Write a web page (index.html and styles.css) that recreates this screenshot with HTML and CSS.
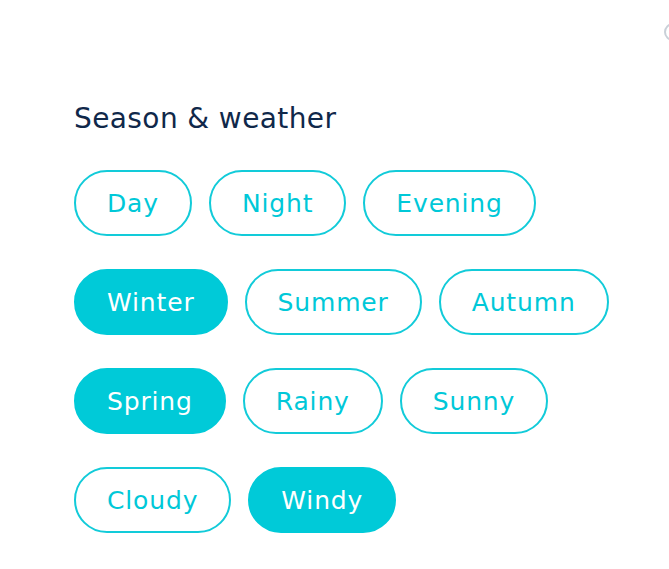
FILE: index.html
```html
<!DOCTYPE html>
<html lang="en">
<head>
<meta charset="utf-8">
<title>Season & weather</title>
<link rel="stylesheet" href="styles.css">
</head>
<body>
<span class="corner-icon" aria-hidden="true"></span>
<section class="panel">
  <h2 class="title">Season &amp; weather</h2>
  <div class="chip-row">
    <button class="chip">Day</button>
    <button class="chip">Night</button>
    <button class="chip">Evening</button>
  </div>
  <div class="chip-row">
    <button class="chip chip--active">Winter</button>
    <button class="chip">Summer</button>
    <button class="chip">Autumn</button>
  </div>
  <div class="chip-row">
    <button class="chip chip--active">Spring</button>
    <button class="chip">Rainy</button>
    <button class="chip">Sunny</button>
  </div>
  <div class="chip-row">
    <button class="chip">Cloudy</button>
    <button class="chip chip--active">Windy</button>
  </div>
</section>
</body>
</html>
```
FILE: styles.css
```css
html, body {
  margin: 0;
  padding: 0;
  background: #ffffff;
}
body {
  width: 669px;
  height: 569px;
  overflow: hidden;
  position: relative;
  font-family: "DejaVu Sans", "Open Sans", sans-serif;
}
.corner-icon {
  position: absolute;
  left: 664px;
  top: 23px;
  width: 14px;
  height: 14px;
  border: 2px solid #c9d0d8;
  border-radius: 50%;
}
.panel {
  padding: 101px 0 0 74px;
  display: flex;
  flex-direction: column;
  gap: 33px;
}
.title {
  margin: 0;
  font-size: 28px;
  font-weight: 400;
  line-height: 36px;
  letter-spacing: 0.4px;
  color: #10284a;
}
.chip-row {
  display: flex;
  gap: 17px;
}
.chip {
  height: 66px;
  padding: 0 31px;
  border: 2px solid #12cbd9;
  border-radius: 33px;
  background: #ffffff;
  color: #00c8d8;
  font-family: inherit;
  font-size: 25px;
  font-weight: 400;
  letter-spacing: 0.85px;
  cursor: pointer;
}
.chip--active {
  background: #00cad8;
  border-color: #00cad8;
  color: #ffffff;
}
```
